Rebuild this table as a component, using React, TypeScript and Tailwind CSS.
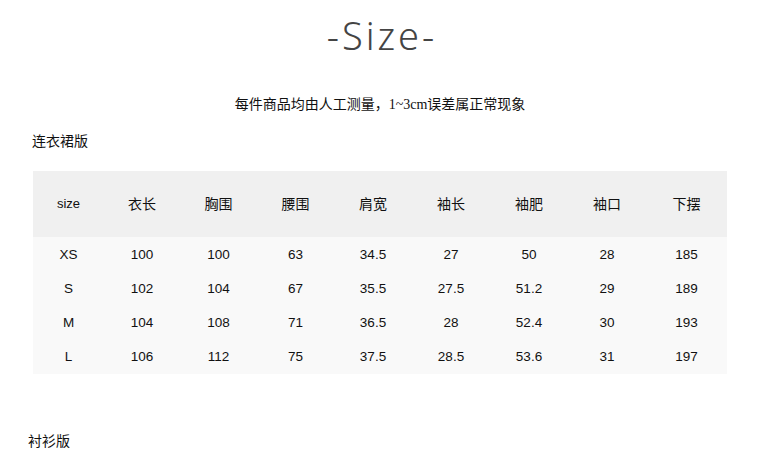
import React from "react";

const headers = ["size", "衣长", "胸围", "腰围", "肩宽", "袖长", "袖肥", "袖口", "下摆"];
const rows = [
  ["XS", "100", "100", "63", "34.5", "27", "50", "28", "185"],
  ["S", "102", "104", "67", "35.5", "27.5", "51.2", "29", "189"],
  ["M", "104", "108", "71", "36.5", "28", "52.4", "30", "193"],
  ["L", "106", "112", "75", "37.5", "28.5", "53.6", "31", "197"],
];

const font = "font-['Liberation_Sans','Noto_Sans_CJK_SC',sans-serif]";
const cols = "grid grid-cols-[71px_76px_77px_77px_78px_78px_78px_78px_81px]";

export default function App() {
  return (
    <div className={`w-[760px] h-[449px] bg-white text-[#111] overflow-hidden ${font}`}>
      <div className="h-[70px] flex items-center justify-center pl-[4px] font-['Noto_Sans',sans-serif] font-light text-[38px] text-[#444] tracking-[3px]">
        -Size-
      </div>
      <div className="mt-[23px] h-[20px] leading-[20px] text-center text-[14px] font-['Noto_Sans_CJK_SC',serif]">
        每件商品均由人工测量，<span className="font-['Liberation_Serif',serif]">1~3cm</span>误差属正常现象
      </div>
      <div className="mt-[18px] h-[20px] leading-[20px] pl-[32px] text-[14px]">连衣裙版</div>
      <div className="mt-[20px] mx-[33px] text-[13.5px]">
        <div className={`${cols} h-[66px] bg-[#f0f0f0] items-center text-center text-[14px]`}>
          {headers.map((h, i) => (
            <div key={h} className={i === 0 ? "text-[13px]" : ""}>{h}</div>
          ))}
        </div>
        <div className="bg-[#f9f9f9]">
          {rows.map((r) => (
            <div key={r[0]} className={`${cols} h-[34px] last:h-[35px] items-center text-center pt-[2px]`}>
              {r.map((c, i) => (
                <div key={i}>{c}</div>
              ))}
            </div>
          ))}
        </div>
      </div>
      <div className="mt-[57px] h-[20px] leading-[20px] pl-[28px] text-[14px]">衬衫版</div>
    </div>
  );
}
